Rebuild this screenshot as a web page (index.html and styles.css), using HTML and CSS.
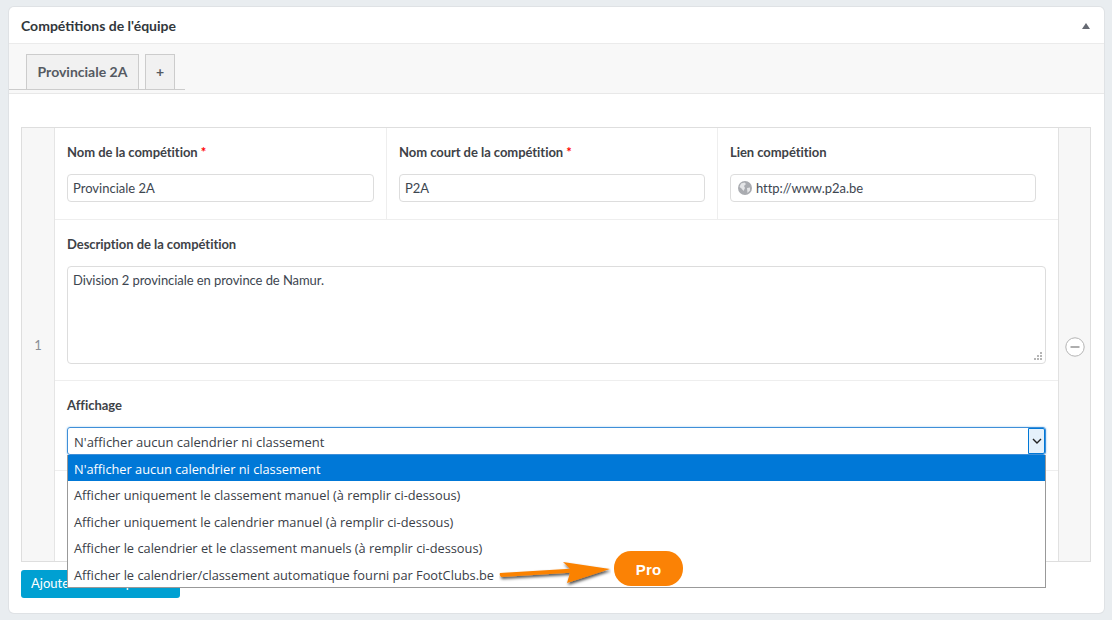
FILE: index.html
```html
<!DOCTYPE html>
<html lang="fr">
<head>
<meta charset="utf-8">
<title>Compétitions de l'équipe</title>
<link rel="stylesheet" href="styles.css">
</head>
<body>
<section class="card">
  <header class="card-head">
    <h2>Compétitions de l'équipe</h2>
    <svg class="caret" width="8" height="6" viewBox="0 0 8 6"><path d="M4 0 L8 6 L0 6 Z" fill="#666a73"/></svg>
  </header>
  <div class="tabs">
    <div class="tab tab-main">Provinciale 2A</div>
    <div class="tab tab-add">+</div>
  </div>
  <div class="card-body">
    <div class="repeater">
      <div class="side side-left">1</div>
      <div class="main">
        <div class="row row-three">
          <div class="cell">
            <label>Nom de la compétition <span class="req">*</span></label>
            <div class="input">Provinciale 2A</div>
          </div>
          <div class="cell">
            <label>Nom court de la compétition <span class="req">*</span></label>
            <div class="input">P2A</div>
          </div>
          <div class="cell cell-last">
            <label>Lien compétition</label>
            <div class="input input-url">
              <svg width="14" height="14" viewBox="0 0 14 14"><circle cx="7" cy="7" r="7" fill="#a9abb0"/><path d="M3 2.5 L6.5 1.5 L8 3 L6 5 L7 7 L5.5 10 L3.5 7.5 L1.5 6 Z M9 7 L12 6.5 L12 9.5 L9.5 12 Z" fill="#e4e5e7"/></svg>
              <span>http://www.p2a.be</span>
            </div>
          </div>
        </div>
        <div class="row row-desc">
          <label>Description de la compétition</label>
          <div class="textarea">Division 2 provinciale en province de Namur.
            <svg class="grip" width="8" height="8" viewBox="0 0 8 8"><path d="M6 0h2v2H6z M3 3h2v2H3z M6 3h2v2H6z M0 6h2v2H0z M3 6h2v2H3z M6 6h2v2H6z" fill="#b5b5b5"/></svg>
          </div>
        </div>
        <div class="row row-display">
          <label>Affichage</label>
          <div class="select-wrap">
            <div class="select">
              <span class="select-value">N'afficher aucun calendrier ni classement</span>
              <span class="select-btn"><svg width="10" height="6" viewBox="0 0 10 6"><path d="M1 1 L5 5 L9 1" fill="none" stroke="#222" stroke-width="1.4"/></svg></span>
            </div>
            <ul class="options">
              <li class="selected">N'afficher aucun calendrier ni classement</li>
              <li>Afficher uniquement le classement manuel (à remplir ci-dessous)</li>
              <li>Afficher uniquement le calendrier manuel (à remplir ci-dessous)</li>
              <li>Afficher le calendrier et le classement manuels (à remplir ci-dessous)</li>
              <li>Afficher le calendrier/classement automatique fourni par FootClubs.be</li>
            </ul>
            <svg class="arrow" width="112" height="34" viewBox="0 0 112 34">
              <defs><filter id="sh" x="-20%" y="-50%" width="140%" height="220%"><feDropShadow dx="1" dy="2" stdDeviation="1.8" flood-color="#000" flood-opacity=".7"/></filter></defs>
              <path d="M1 17 L71 12.7 L64 6 L111 13 L68 27 L71 16.7 L2 21 Q0 19 1 17 Z" fill="#fb8205" filter="url(#sh)"/>
            </svg>
            <div class="pro">Pro</div>
          </div>
        </div>
        <div class="row row-rest"></div>
      </div>
      <div class="side side-right">
        <svg width="20" height="20" viewBox="0 0 20 20"><circle cx="10" cy="10" r="9.2" fill="#fff" stroke="#b4b4b4"/><path d="M5.5 10h9" stroke="#8c8c8c" stroke-width="1.4"/></svg>
      </div>
    </div>
    <button class="btn" type="button">Ajouter une compétition</button>
  </div>
</section>
</body>
</html>
```

FILE: styles.css
```css
* { box-sizing: border-box; }
html, body { height: 100%; }
body {
  margin: 0;
  padding: 7px 8px 7px 9px;
  background: #e9edf0;
  font-family: Lato, "Liberation Sans", sans-serif;
  color: #3c434a;
  overflow: hidden;
}
.card {
  height: 606px;
  background: #fff;
  border-radius: 5px;
  box-shadow: 0 0 0 1px #dfe2e5;
  display: flex;
  flex-direction: column;
}
.card-head {
  height: 37px;
  flex: none;
  display: flex;
  align-items: center;
  justify-content: space-between;
  padding: 1px 14px 0 12px;
  border-bottom: 1px solid #ebebeb;
}
.card-head h2 {
  margin: 0;
  font-size: 14px;
  font-weight: 700;
  color: #32373c;
}
.tabs {
  height: 50px;
  flex: none;
  display: flex;
  gap: 6px;
  padding: 10px 0 0 17px;
  background: #f8f8f8;
  border-bottom: 1px solid #e8e8e8;
  position: relative;
}
.tabs::after {
  content: "";
  position: absolute;
  left: 0;
  width: 176px;
  top: 45px;
  border-top: 1px solid #ccc;
}
.tab {
  height: 36px;
  padding-bottom: 2px;
  border: 1px solid #ccc;
  border-bottom: 0;
  background: #f1f1f1;
  font-size: 14px;
  font-weight: 700;
  color: #555a62;
  display: flex;
  align-items: center;
  justify-content: center;
}
.tab-main { width: 113px; }
.tab-add { width: 30px; font-size: 14px; }
.card-body {
  flex: 1;
  padding: 33px 13px 0 12px;
}
.repeater {
  height: 435px;
  display: flex;
  border: 1px solid #dedede;
}
.side {
  flex: none;
  background: #f7f7f7;
  display: flex;
  align-items: center;
  justify-content: center;
}
.side-left {
  width: 33px;
  border-right: 1px solid #e5e5e5;
  color: #8a8f96;
  font-size: 13px;
  padding-top: 1px;
}
.side-right {
  width: 32px;
  border-left: 1px solid #e1e1e1;
  padding-top: 5px;
}
.main {
  flex: 1;
  min-width: 0;
  display: flex;
  flex-direction: column;
}
.row { border-bottom: 1px solid #eee; }
label {
  display: block;
  font-size: 13px;
  line-height: 16px;
  font-weight: 700;
  letter-spacing: -0.05px;
  color: #3e4247;
}
.req { color: #f00; }
.row-three {
  height: 92px;
  display: flex;
}
.cell {
  width: 332px;
  padding: 16px 12px 0 12px;
  border-right: 1px solid #eee;
}
.cell:nth-child(2) { width: 331px; }
.cell-last { flex: 1; border-right: 0; padding-right: 22px; }
.input {
  margin-top: 14px;
  height: 28px;
  border: 1px solid #ddd;
  border-radius: 4px;
  padding: 0 5px;
  font-size: 13px;
  line-height: 26px;
  color: #3d4650;
}
.input-url {
  display: flex;
  align-items: center;
  gap: 4px;
  padding-left: 7px;
  letter-spacing: -0.05px;
}
.row-desc {
  height: 161px;
  padding: 16px 12px 0 12px;
}
.textarea {
  margin-top: 14px;
  height: 98px;
  border: 1px solid #ddd;
  border-radius: 4px;
  padding: 5px 5px;
  font-size: 13px;
  line-height: 16px;
  letter-spacing: -0.07px;
  color: #3d4650;
  position: relative;
}
.grip { position: absolute; right: 3px; bottom: 3px; }
.row-display {
  height: 90px;
  padding: 16px 12px 0 12px;
}
.select-wrap {
  position: relative;
  margin-top: 14px;
}
.select {
  height: 28px;
  border: 1px solid #3f8fd8;
  border-radius: 3px;
  box-shadow: 0 0 2px #8fc0ec;
  padding-left: 6px;
  display: flex;
  align-items: center;
  justify-content: space-between;
  font-family: "Open Sans", "Noto Sans", sans-serif;
  font-size: 13px;
  color: #3a4047;
}
.select-value { padding-top: 2px; }
.select-btn {
  width: 17px;
  height: 26px;
  background: #e5f1fb;
  border: 1px solid #0078d7;
  border-radius: 0 2px 2px 0;
  display: flex;
  align-items: center;
  justify-content: center;
}
.options {
  position: absolute;
  left: 0;
  right: 0;
  top: 28px;
  height: 133px;
  margin: 0;
  padding: 0;
  list-style: none;
  background: #fff;
  border: 1px solid #999;
  border-top: 0;
  font-family: "Open Sans", "Noto Sans", sans-serif;
  font-size: 12.8px;
  color: #3a4047;
  z-index: 2;
}
.options li {
  height: 26.4px;
  line-height: 29px;
  padding-left: 6px;
  white-space: nowrap;
}
.options li.selected {
  background: #0078d7;
  color: #fff;
}
.arrow {
  position: absolute;
  left: 432px;
  top: 129px;
  z-index: 3;
}
.pro {
  position: absolute;
  left: 547px;
  top: 124px;
  width: 69px;
  height: 35px;
  border-radius: 17px;
  background: #fb8205;
  color: #fff;
  font-family: "Liberation Sans", sans-serif;
  font-weight: 700;
  font-size: 15px;
  line-height: 37px;
  text-align: center;
  letter-spacing: .2px;
  z-index: 3;
}
.row-rest { flex: 1; border-bottom: 0; }
.btn {
  display: block;
  margin-top: 8px;
  width: 159px;
  height: 28px;
  padding: 0 10px 3px;
  border: 0;
  border-radius: 3px;
  background: #00a0d2;
  color: #fff;
  font-family: Lato, sans-serif;
  font-size: 13px;
  text-align: left;
  white-space: nowrap;
}
```
